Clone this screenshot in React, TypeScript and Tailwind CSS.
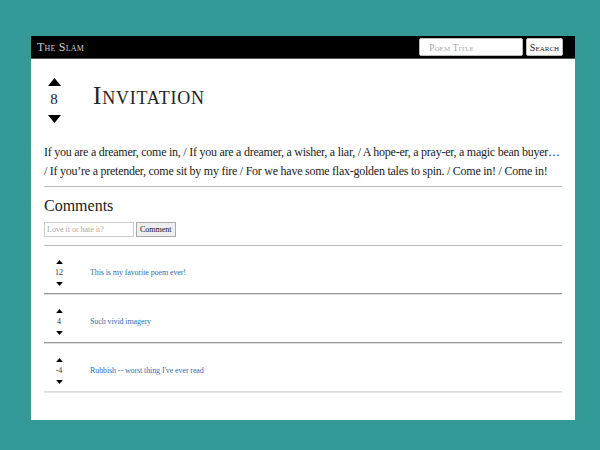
import React from "react";

const serif = { fontFamily: '"Liberation Serif", "Times New Roman", serif' };

function Up({ w, h }: { w: number; h: number }) {
  return (
    <svg width={w} height={h} viewBox="0 0 10 6" className="block">
      <polygon points="0,6 5,0 10,6" fill="#000" />
    </svg>
  );
}
function Down({ w, h }: { w: number; h: number }) {
  return (
    <svg width={w} height={h} viewBox="0 0 10 6" className="block">
      <polygon points="0,0 10,0 5,6" fill="#000" />
    </svg>
  );
}

const comments = [
  { votes: "12", text: "This is my favorite poem ever!" },
  { votes: "4", text: "Such vivid imagery" },
  { votes: "-4", text: "Rubbish -- worst thing I've ever read" },
];

export default function App() {
  return (
    <div className="w-[600px] h-[450px] bg-[#349a98] pt-[36px] pl-[31px]" style={serif}>
      <div className="w-[544px] h-[384px] bg-white flex flex-col">
        <header className="h-[23px] bg-black border-b border-[#555] flex items-center justify-between pl-[6px] pr-[12px]">
          <span className="text-[12px] text-[#cfcfcf] [font-variant:small-caps] tracking-[0.2px]">The Slam</span>
          <div className="flex items-center gap-[3px]">
            <div className="w-[104px] h-[18px] bg-white rounded-[2px] border border-[#bbb] flex items-center pl-[9px]">
              <span className="text-[10px] text-[#aaa] [font-variant:small-caps]">Poem Title</span>
            </div>
            <div className="w-[37px] h-[18px] bg-white rounded-[2px] border border-[#bbb] flex items-center justify-center">
              <span className="text-[10px] text-[#222] [font-variant:small-caps]">Search</span>
            </div>
          </div>
        </header>
        <main className="px-[13px] flex flex-col">
          <div className="flex items-center pt-[19px]">
            <div className="w-[22px] flex flex-col items-center ml-[-1px]">
              <Up w={13} h={8} />
              <span className="text-[15px] leading-[17px] mt-[5px] mb-[7px] text-[#222]">8</span>
              <Down w={13} h={8} />
            </div>
            <h1 className="ml-[28px] mt-[-10px] text-[25px] font-normal text-[#222] [font-variant:small-caps] tracking-[0.8px]">
              Invitation
            </h1>
          </div>
          <p className="mt-[20px] text-[12px] leading-[19px] tracking-[-0.25px] text-[#222] whitespace-nowrap">
            If you are a dreamer, come in, / If you are a dreamer, a wisher, a liar, / A hope-er, a pray-er, a magic bean buyer…
            <br />
            / If you’re a pretender, come sit by my fire / For we have some flax-golden tales to spin. / Come in! / Come in!
          </p>
          <div className="mt-[5px] border-t border-[#bbb]" />
          <h2 className="mt-[9px] text-[16px] leading-[20px] text-[#222]">Comments</h2>
          <div className="flex items-center mt-[6px] gap-[2px]">
            <div className="w-[90px] h-[15px] border border-[#ccc] flex items-center pl-[2px]">
              <span className="text-[8px] text-[#aaa]">Love it or hate it?</span>
            </div>
            <div className="h-[15px] px-[3px] bg-[#eee] border border-[#aaa] flex items-center">
              <span className="text-[8px] text-[#111]">Comment</span>
            </div>
          </div>
          <div className="mt-[8px] border-t border-[#bbb]" />
          {comments.map((c, i) => (
            <div key={i}>
              <div className="h-[47px] flex items-center pt-[14px] pb-[7px]">
                <div className="w-[30px] flex flex-col items-center">
                  <Up w={7} h={4} />
                  <span className="text-[8px] leading-[10px] my-[4px] text-[#333]">{c.votes}</span>
                  <Down w={7} h={4} />
                </div>
                <span className="ml-[16px] text-[8px] tracking-[-0.1px] text-[#2f6fb5]">{c.text}</span>
              </div>
              <div
                className={
                  i < 2
                    ? "border-t border-[#999] border-b border-b-[#ddd]"
                    : "border-t border-[#ddd] border-b border-b-[#e8e8e8]"
                }
              />
            </div>
          ))}
        </main>
      </div>
    </div>
  );
}
